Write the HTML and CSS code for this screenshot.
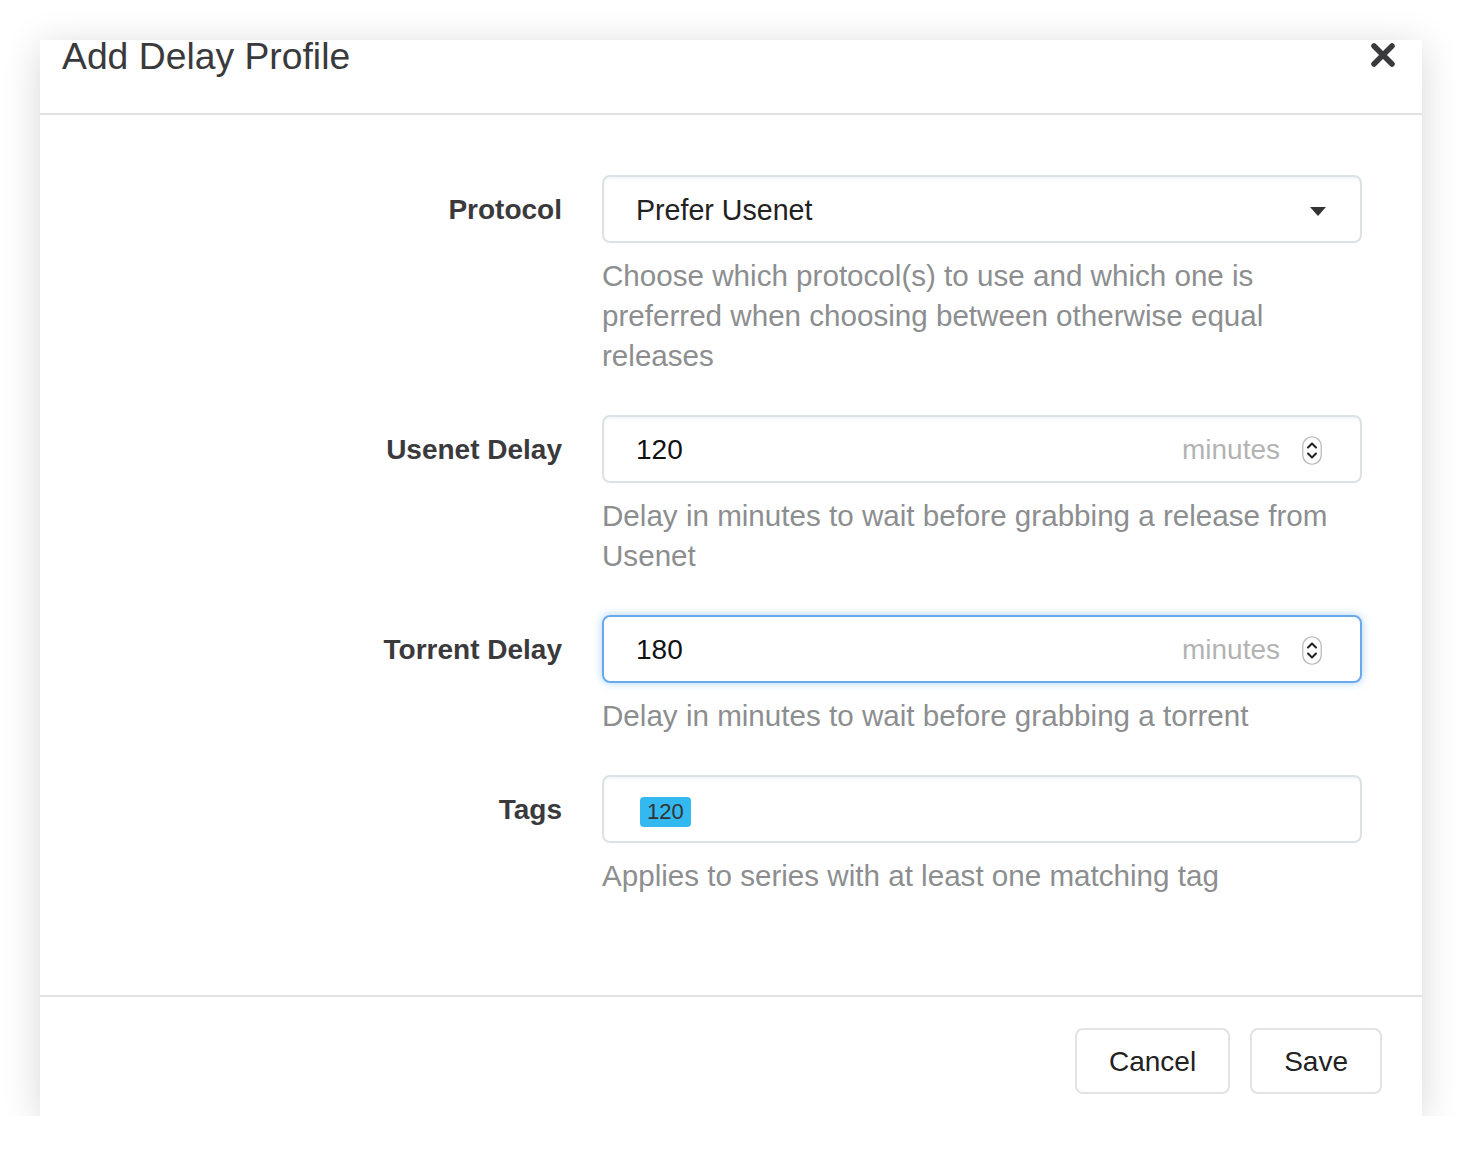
FILE: index.html
```html
<!DOCTYPE html>
<html lang="en">
<head>
<meta charset="utf-8">
<title>Add Delay Profile</title>
<link rel="stylesheet" href="styles.css">
</head>
<body>
<div class="modal">
  <div class="modal-header">
    <h4 class="modal-title">Add Delay Profile</h4>
    <button class="close" type="button" aria-label="Close">
      <svg width="26" height="26" viewBox="0 0 26 26"><path d="M4 4 L22 22 M22 4 L4 22" stroke="#3a3a3d" stroke-width="5.5" stroke-linecap="round" fill="none"/></svg>
    </button>
  </div>
  <div class="modal-body">
    <div class="form-group">
      <label class="control-label">Protocol</label>
      <div class="field">
        <div class="form-control select">
          <span class="value">Prefer Usenet</span>
          <span class="caret"></span>
        </div>
        <p class="help-block">Choose which protocol(s) to use and which one is preferred when choosing between otherwise equal releases</p>
      </div>
    </div>
    <div class="form-group">
      <label class="control-label">Usenet Delay</label>
      <div class="field">
        <div class="form-control number">
          <span class="value">120</span>
          <span class="unit">minutes</span>
          <span class="spinner"><svg width="20" height="29" viewBox="0 0 20 29"><rect x="0.75" y="0.75" width="18.5" height="27.5" rx="9.25" ry="9.25" fill="#fff" stroke="#b5b5b5" stroke-width="1.2"/><path d="M6 11.5 L10 7.5 L14 11.5 M6 17.5 L10 21.5 L14 17.5" stroke="#222" stroke-width="2" fill="none" stroke-linecap="round" stroke-linejoin="round"/></svg></span>
        </div>
        <p class="help-block">Delay in minutes to wait before grabbing a release from Usenet</p>
      </div>
    </div>
    <div class="form-group">
      <label class="control-label">Torrent Delay</label>
      <div class="field">
        <div class="form-control number focus">
          <span class="value">180</span>
          <span class="unit">minutes</span>
          <span class="spinner"><svg width="20" height="29" viewBox="0 0 20 29"><rect x="0.75" y="0.75" width="18.5" height="27.5" rx="9.25" ry="9.25" fill="#fff" stroke="#b5b5b5" stroke-width="1.2"/><path d="M6 11.5 L10 7.5 L14 11.5 M6 17.5 L10 21.5 L14 17.5" stroke="#222" stroke-width="2" fill="none" stroke-linecap="round" stroke-linejoin="round"/></svg></span>
        </div>
        <p class="help-block">Delay in minutes to wait before grabbing a torrent</p>
      </div>
    </div>
    <div class="form-group">
      <label class="control-label">Tags</label>
      <div class="field">
        <div class="form-control tags">
          <span class="tag">120</span>
        </div>
        <p class="help-block">Applies to series with at least one matching tag</p>
      </div>
    </div>
  </div>
  <div class="modal-footer">
    <button class="btn" type="button">Cancel</button>
    <button class="btn" type="button">Save</button>
  </div>
</div>
</body>
</html>
```
FILE: styles.css
```css
html, body {
  margin: 0;
  padding: 0;
  background: #fff;
}
body {
  padding: 40px 40px 0 40px;
  font-family: "Liberation Sans", Arial, sans-serif;
  color: #333;
}
.modal {
  width: 1382px;
  height: 1076px;
  background: #fff;
  box-shadow: 0 6px 36px rgba(0, 0, 0, 0.16);
  display: flex;
  flex-direction: column;
}
.modal-header {
  height: 73px;
  border-bottom: 2px solid #e2e2e2;
  display: flex;
  justify-content: space-between;
  align-items: flex-start;
  padding: 0 26px 0 22px;
}
.modal-title {
  margin: 0;
  font-size: 37.3px;
  font-weight: normal;
  line-height: 32px;
  color: #3a3a3d;
}
.close {
  border: 0;
  background: none;
  padding: 0;
  margin-top: 2px;
  width: 26px;
  height: 26px;
  display: block;
}
.close svg { display: block; }
.modal-body {
  padding: 60px 0 98px 0;
  display: flex;
  flex-direction: column;
  gap: 39px;
  flex: 1;
}
.form-group {
  display: grid;
  grid-template-columns: 522px 760px;
  column-gap: 40px;
}
.control-label {
  text-align: right;
  font-weight: bold;
  font-size: 28px;
  line-height: 40px;
  padding-top: 15px;
  color: #3a3a3d;
}
.form-control {
  box-sizing: border-box;
  height: 68px;
  border: 2px solid #dbe2e5;
  border-radius: 8px;
  box-shadow: inset 0 2px 2px rgba(0, 0, 0, 0.04);
  display: flex;
  align-items: center;
  padding: 0 34px 0 32px;
  font-size: 28px;
  color: #111;
}
.form-control .value { flex: 1; }
.select .value {
  color: #222;
  font-size: 28.6px;
  padding-top: 2px;
}
.caret {
  width: 0;
  height: 0;
  border-left: 8.5px solid transparent;
  border-right: 8.5px solid transparent;
  border-top: 9px solid #333;
  margin-top: 4px;
}
.number { padding-right: 38px; }
.number .value { padding-top: 2px; }
.unit {
  color: #b3b3b3;
  margin-right: 22px;
  padding-top: 2px;
}
.spinner { display: block; height: 29px; margin-top: 2px; }
.spinner svg { display: block; }
.focus {
  border-color: #6aa8ec;
  box-shadow: 0 0 8px rgba(102, 175, 233, 0.55);
}
.tags { padding-left: 36px; }
.tag {
  display: inline-block;
  background: #33b8f0;
  color: #333;
  font-size: 22px;
  line-height: 30px;
  padding: 0 7px;
  border-radius: 4px;
  margin-top: 5px;
}
.help-block {
  margin: 13px 0 0 0;
  font-size: 29.6px;
  line-height: 40px;
  color: #8c8e90;
}
.modal-footer {
  border-top: 2px solid #e2e2e2;
  padding: 31px 40px 22px 0;
  display: flex;
  justify-content: flex-end;
  align-items: flex-start;
  gap: 20px;
}
.btn {
  height: 66px;
  border: 2px solid #e3e3e3;
  border-radius: 8px;
  background: #fff;
  font-family: "Liberation Sans", Arial, sans-serif;
  font-size: 28px;
  color: #222;
  padding: 2px 32px 0 32px;
  margin: 0;
}
```
